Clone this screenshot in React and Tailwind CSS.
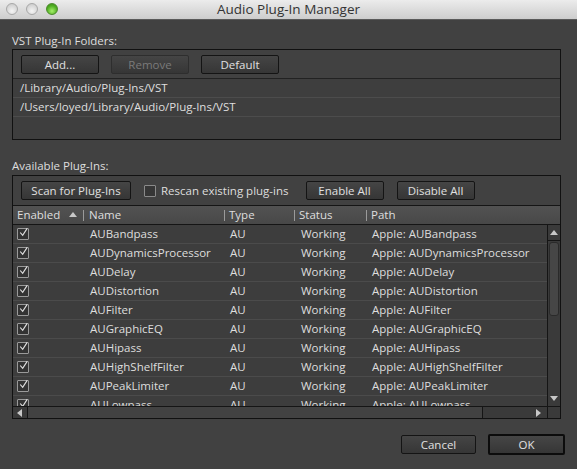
import React from "react";

const plugins = [
  "AUBandpass",
  "AUDynamicsProcessor",
  "AUDelay",
  "AUDistortion",
  "AUFilter",
  "AUGraphicEQ",
  "AUHipass",
  "AUHighShelfFilter",
  "AUPeakLimiter",
  "AULowpass",
];

const font = { fontFamily: '"Open Sans", "DejaVu Sans", sans-serif' };

const Button = ({ children, disabled, width = "w-[78px]" }) => (
  <div
    className={`${width} h-[19px] flex items-center justify-center rounded-[2px] bg-gradient-to-b from-[#454545] to-[#363636] text-[11.5px] border ${
      disabled ? "text-[#7a7a7a] border-[#2e2e2e]" : "text-[#e0e0e0] border-[#141414]"
    }`}
  >
    {children}
  </div>
);

const Check = ({ checked }) => (
  <div className="w-[12px] h-[12px] border border-[#9a9a9a] bg-[#333] rounded-[1px] flex items-center justify-center">
    {checked && (
      <svg width="11" height="11" viewBox="0 0 11 11" className="-mt-[3px] ml-[1px]">
        <path d="M1.5 5.5 L4.5 9 L10 0.5" stroke="#e0e0e0" strokeWidth="1.4" fill="none" />
      </svg>
    )}
  </div>
);

const Light = ({ color }) => (
  <div
    className={`w-[12px] h-[12px] rounded-full border ${
      color === "green"
        ? "border-[#4b8a2a] bg-[radial-gradient(circle_at_50%_70%,#a6f06a,#4fae22_60%,#3c8a18)]"
        : "border-[#a8a8a8] bg-[radial-gradient(circle_at_50%_70%,#f4f4f4,#d8d8d8_60%,#c4c4c4)]"
    }`}
  />
);

const Tri = ({ dir }) => {
  const pts = {
    up: "0,6 4,1 8,6",
    down: "0,1 4,6 8,1",
    left: "6,0 1,4 6,8",
    right: "1,0 6,4 1,8",
  }[dir];
  return (
    <svg width="8" height="8" viewBox="0 0 8 8">
      <polygon points={pts} fill="#c8c8c8" />
    </svg>
  );
};

const cols = "grid grid-cols-[71px_141px_70px_72px_1fr]";

export default function App() {
  return (
    <div className="w-[577px] h-[469px] bg-[#414141] flex flex-col overflow-hidden text-[#dedede]" style={font}>
      {/* title bar */}
      <div className="h-[20px] relative flex items-center justify-center bg-gradient-to-b from-[#ececec] to-[#cdcdcd] border-b border-[#5a5a5a]">
        <div className="absolute left-[6px] top-[3px] flex gap-[8px]">
          <Light />
          <Light />
          <Light color="green" />
        </div>
        <span className="text-[13.5px] text-[#333] leading-none">Audio Plug-In Manager</span>
      </div>

      <div className="pl-[12px] pr-[16px] flex flex-col">
        <div className="mt-[12px] h-[17px] text-[11.5px] leading-[17px]">VST Plug-In Folders:</div>
        <div className="border border-[#111] flex flex-col h-[91px]">
          <div className="flex gap-[12px] pl-[8px] pt-[5px] h-[29px] border-b border-[#222]">
            <Button>Add...</Button>
            <Button disabled>Remove</Button>
            <Button>Default</Button>
          </div>
          {["/Library/Audio/Plug-Ins/VST", "/Users/loyed/Library/Audio/Plug-Ins/VST"].map((p) => (
            <div key={p} className="h-[19px] border-b border-[#4c4c4c] bg-[#3e3e3e] pl-[7px] text-[11.5px] leading-[18px]">
              {p}
            </div>
          ))}
          <div className="flex-1 bg-[#3e3e3e]" />
        </div>

        <div className="mt-[17px] h-[18px] text-[11.5px] leading-[18px]">Available Plug-Ins:</div>
        <div className="border border-[#111] flex flex-col h-[244px]">
          <div className="flex items-center pl-[8px] h-[30px] border-b border-[#151515]">
            <Button width="w-[110px]">Scan for Plug-Ins</Button>
            <div className="ml-[13px] flex items-center gap-[5px] text-[11.5px]">
              <div className="w-[12px] h-[12px] border border-[#8a8a8a] bg-[#363636] rounded-[1px]" />
              <span>Rescan existing plug-ins</span>
            </div>
            <div className="ml-[17px]">
              <Button>Enable All</Button>
            </div>
            <div className="ml-[13px]">
              <Button>Disable All</Button>
            </div>
          </div>

          {/* header */}
          <div className={`${cols} h-[19px] bg-gradient-to-b from-[#525252] to-[#484848] border-b border-[#151515] text-[11.5px] items-center`}>
            <div className="flex items-center pl-[4px] h-full">
              <span>Enabled</span>
              <span className="ml-[9px]"><Tri dir="up" /></span>
              <span className="ml-auto w-px h-[11px] bg-[#9a9a9a]" />
            </div>
            <div className="flex items-center pl-[5px] h-full">
              <span>Name</span>
              <span className="ml-auto w-px h-[11px] bg-[#9a9a9a]" />
            </div>
            <div className="flex items-center pl-[4px] h-full">
              <span>Type</span>
              <span className="ml-auto w-px h-[11px] bg-[#9a9a9a]" />
            </div>
            <div className="flex items-center pl-[4px] h-full">
              <span>Status</span>
              <span className="ml-auto w-px h-[11px] bg-[#9a9a9a]" />
            </div>
            <div className="flex items-center pl-[4px] h-full">
              <span>Path</span>
            </div>
          </div>

          {/* body */}
          <div className="flex h-[181px]">
            <div className="flex-1 overflow-hidden bg-[#3d3d3d]">
              {plugins.map((p) => (
                <div key={p} className={`${cols} h-[19px] border-b border-[#4b4b4b] items-center text-[11.5px]`}>
                  <div className="pl-[4px]"><Check checked /></div>
                  <div className="pl-[6px]">{p}</div>
                  <div className="pl-[5px]">AU</div>
                  <div className="pl-[6px]">Working</div>
                  <div className="pl-[5px]">Apple: {p}</div>
                </div>
              ))}
            </div>
            <div className="w-[13px] border-l border-[#151515] bg-[#3a3a3a] flex flex-col">
              <div className="h-[16px] flex items-center justify-center border-b border-[#151515]">
                <Tri dir="up" />
              </div>
              <div className="h-[74px] mx-[1px] mt-px rounded-[3px] border border-[#2a2a2a] bg-[#464646]" />
              <div className="flex-1" />
              <div className="h-[14px] flex items-center justify-center">
                <Tri dir="down" />
              </div>
            </div>
          </div>

          {/* horizontal scrollbar */}
          <div className="flex h-[12px] border-t border-[#151515] bg-[#3a3a3a]">
            <div className="w-[15px] flex items-center justify-center border-r border-[#151515]">
              <Tri dir="left" />
            </div>
            <div className="w-[455px] border-r border-[#151515] bg-[#424242]" />
            <div className="flex-1 flex items-center justify-end pr-[4px]">
              <Tri dir="right" />
            </div>
            <div className="w-[13px] border-l border-[#151515]" />
          </div>
        </div>

        <div className="mt-[15px] flex justify-end items-center gap-[12px] -mr-[4px]">
          <Button width="w-[75px]">Cancel</Button>
          <div className="w-[77px] h-[21px] flex items-center justify-center rounded-[2px] border-2 border-[#0c0c0c] bg-gradient-to-b from-[#464646] to-[#363636] text-[11.5px] text-[#e0e0e0]">
            OK
          </div>
        </div>
      </div>
    </div>
  );
}
